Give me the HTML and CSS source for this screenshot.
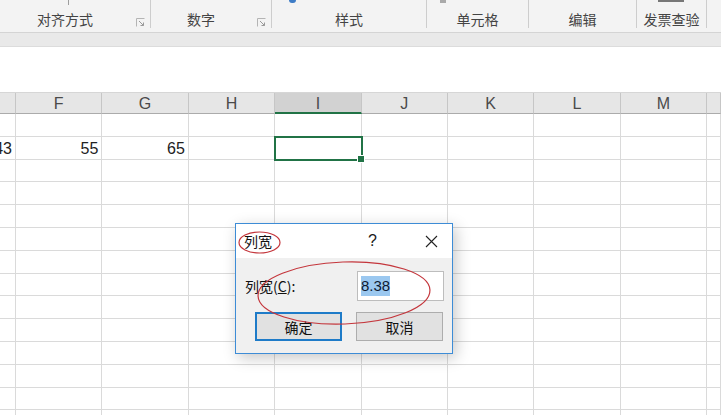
FILE: index.html
```html
<!DOCTYPE html>
<html lang="zh-CN">
<head>
    <meta charset="UTF-8">
    <title>列宽</title>
    <link rel="stylesheet" href="styles.css">
</head>
<body>
    <div class="ribbon">
        <div class="group g-align">
            <span class="icon-tip tip-align"></span>
            <span class="group-label">对齐方式</span>
            <span class="launcher"><svg width="9" height="9" viewBox="0 0 9 9"><path d="M0.5 8.5V0.5H8.5" fill="none" stroke="#b4b4b4"/><path d="M3 3L7.5 7.5M4.5 7.5H7.5V4.5" fill="none" stroke="#9a9a9a"/></svg></span>
        </div>
        <div class="group g-number">
            <span class="group-label">数字</span>
            <span class="launcher"><svg width="9" height="9" viewBox="0 0 9 9"><path d="M0.5 8.5V0.5H8.5" fill="none" stroke="#b4b4b4"/><path d="M3 3L7.5 7.5M4.5 7.5H7.5V4.5" fill="none" stroke="#9a9a9a"/></svg></span>
        </div>
        <div class="group g-style">
            <span class="icon-tip tip-style"></span>
            <span class="group-label">样式</span>
        </div>
        <div class="group g-cells">
            <span class="icon-tip tip-cells"></span>
            <span class="group-label">单元格</span>
        </div>
        <div class="group g-edit">
            <span class="group-label">编辑</span>
        </div>
        <div class="group g-invoice">
            <span class="icon-tip tip-invoice"></span>
            <span class="group-label">发票查验</span>
        </div>
    </div>
    <div class="ribbon-band"></div>
    <div class="formula-area"></div>

    <div class="sheet" id="sheet"></div>

    <div class="dialog">
        <div class="dialog-title">
            <span class="title-text">列宽</span>
            <span class="title-help">?</span>
            <span class="title-close"><svg width="13" height="13" viewBox="0 0 13 13"><path d="M1 1L12 12M12 1L1 12" stroke="#222" stroke-width="1.1"/></svg></span>
        </div>
        <div class="dialog-body">
            <div class="field-row">
                <span class="field-label">列宽(<u>C</u>):</span>
                <div class="field-input"><span class="selected-text">8.38</span></div>
            </div>
            <div class="button-row">
                <button class="btn btn-default">确定</button>
                <button class="btn">取消</button>
            </div>
        </div>
    </div>

    <!-- red pen marks drawn over the screenshot -->
    <svg class="marks" width="721" height="415" viewBox="0 0 721 415">
        <ellipse cx="259.5" cy="242.5" rx="20.5" ry="10.5" fill="none" stroke="#c4363c" stroke-width="1.2"/>
        <ellipse cx="344" cy="293" rx="86" ry="31" transform="rotate(-2 344 293)" fill="none" stroke="#c4363c" stroke-width="1.2"/>
    </svg>

    <script>
        let columns = ['E', 'F', 'G', 'H', 'I', 'J', 'K', 'L', 'M', 'N'];
        let values = { 2: { E: '43', F: '55', G: '65' } };
        let sheet = document.getElementById('sheet');

        columns.forEach(col => {
            let head = document.createElement('div');
            head.className = 'col-head' + (col === 'I' ? ' col-head-active' : '');
            head.textContent = col === 'E' || col === 'N' ? '' : col;
            sheet.appendChild(head);
        });

        for (let row = 1; row <= 14; row++) {
            columns.forEach(col => {
                let cell = document.createElement('div');
                cell.className = 'cell';
                if (row === 2 && col === 'I') cell.classList.add('cell-active');
                if (values[row] && values[row][col]) cell.textContent = values[row][col];
                sheet.appendChild(cell);
            });
        }
    </script>
</body>
</html>
```

FILE: styles.css
```css
* {
    box-sizing: border-box;
    margin: 0;
    padding: 0;
}

body {
    position: relative;
    width: 721px;
    height: 415px;
    overflow: hidden;
    background: #fff;
    font-family: "Liberation Sans", "Noto Sans CJK SC", sans-serif;
}

/* ribbon */
.ribbon {
    display: flex;
    height: 33px;
    background: #f3f3f3;
    border-bottom: 1px solid #d4d4d4;
}

.group {
    position: relative;
    display: flex;
    height: 28px;
    border-right: 1px solid #cdcdcd;
    font-family: "Noto Sans CJK SC", sans-serif;
    font-size: 14px;
    color: #444;
}

.group-label {
    flex: 1;
    text-align: center;
    line-height: 20px;
    padding-top: 9px;
}

.launcher {
    width: 20px;
    padding: 18px 0 0 6px;
}

.launcher svg {
    display: block;
}

.g-align { width: 151px; }
.g-number { width: 121px; }
.g-style { width: 155px; }
.g-cells { width: 102px; }
.g-edit { width: 108px; }
.g-invoice { width: 70px; }

/* bits of the ribbon icons cut off at the top edge */
.icon-tip {
    position: absolute;
    top: 0;
    height: 3px;
}

.tip-align {
    left: 68px;
    width: 1px;
    height: 5px;
    background: #9d9d9d;
}

.tip-style {
    left: 17px;
    width: 7px;
    border-radius: 0 0 3px 3px;
    background: #3e7cc6;
}

.tip-cells {
    left: 13px;
    width: 6px;
    background: #a9a9a9;
}

.tip-invoice {
    left: 21px;
    width: 26px;
    height: 2px;
    background: #777;
}

.ribbon-band {
    height: 14px;
    background: #e9e9e9;
    border-bottom: 1px solid #dcdcdc;
}

.formula-area {
    height: 45px;
    background: #fff;
}

/* sheet grid */
.sheet {
    display: grid;
    grid-template-columns: 16px repeat(8, 86.4px) 1fr;
    grid-template-rows: 21px;
    grid-auto-rows: 22.8px;
    border-top: 1px solid #d6d6d6;
    font-size: 16px;
    color: #222;
}

.col-head {
    display: flex;
    align-items: center;
    justify-content: center;
    padding-top: 2px;
    background: #e6e6e6;
    border-right: 1px solid #c6c6c6;
    border-bottom: 1px solid #ababab;
    color: #4a4a4a;
    font-size: 16px;
}

.col-head-active {
    background: #d2d2d2;
    border-bottom: 2px solid #217346;
}

.cell {
    display: flex;
    align-items: flex-end;
    justify-content: flex-end;
    padding: 0 3px 1px 0;
    border-right: 1px solid #dadada;
    border-bottom: 1px solid #dadada;
    white-space: nowrap;
}

.cell-active {
    position: relative;
    outline: 2px solid #217346;
    outline-offset: -1px;
    z-index: 1;
}

.cell-active::after {
    content: "";
    position: absolute;
    right: -4px;
    bottom: -4px;
    width: 6px;
    height: 6px;
    background: #217346;
    border: 1px solid #fff;
}

/* column width dialog */
.dialog {
    position: absolute;
    left: 235px;
    top: 223px;
    width: 218px;
    height: 131px;
    border: 1px solid #3d8cd6;
    background: #f0f0f0;
    box-shadow: 3px 4px 14px rgba(0, 0, 0, 0.22);
    font-family: "Noto Sans CJK SC", sans-serif;
    font-size: 14px;
    color: #111;
}

.dialog-title {
    display: flex;
    align-items: center;
    height: 34px;
    background: #fff;
}

.title-text {
    padding-left: 8px;
    flex: 1;
}

.title-help {
    width: 20px;
    font-family: "Liberation Sans", sans-serif;
    font-size: 16px;
    color: #1a1a1a;
    margin-right: 37px;
}

.title-close {
    width: 27px;
    display: flex;
}

.dialog-body {
    padding: 13px 8px 0 9px;
}

.field-row {
    display: flex;
    align-items: center;
    justify-content: space-between;
}

.field-label {
    font-size: 14px;
}

.field-input {
    display: flex;
    align-items: center;
    width: 87px;
    height: 30px;
    padding-left: 3px;
    background: #fff;
    border: 1px solid #bdbdbd;
}

.selected-text {
    background: #9bc8f0;
    font-family: "Liberation Sans", sans-serif;
    font-size: 15px;
    line-height: 20px;
    color: #0d1a33;
}

.button-row {
    display: flex;
    gap: 14px;
    margin-top: 11px;
    padding-left: 10px;
}

.btn {
    width: 87px;
    height: 29px;
    background: #e1e1e1;
    border: 1px solid #adadad;
    font-family: "Noto Sans CJK SC", sans-serif;
    font-size: 14px;
    color: #111;
}

.btn-default {
    border: 2px solid #1e7bc8;
}

.marks {
    position: absolute;
    left: 0;
    top: 0;
    pointer-events: none;
}
```
